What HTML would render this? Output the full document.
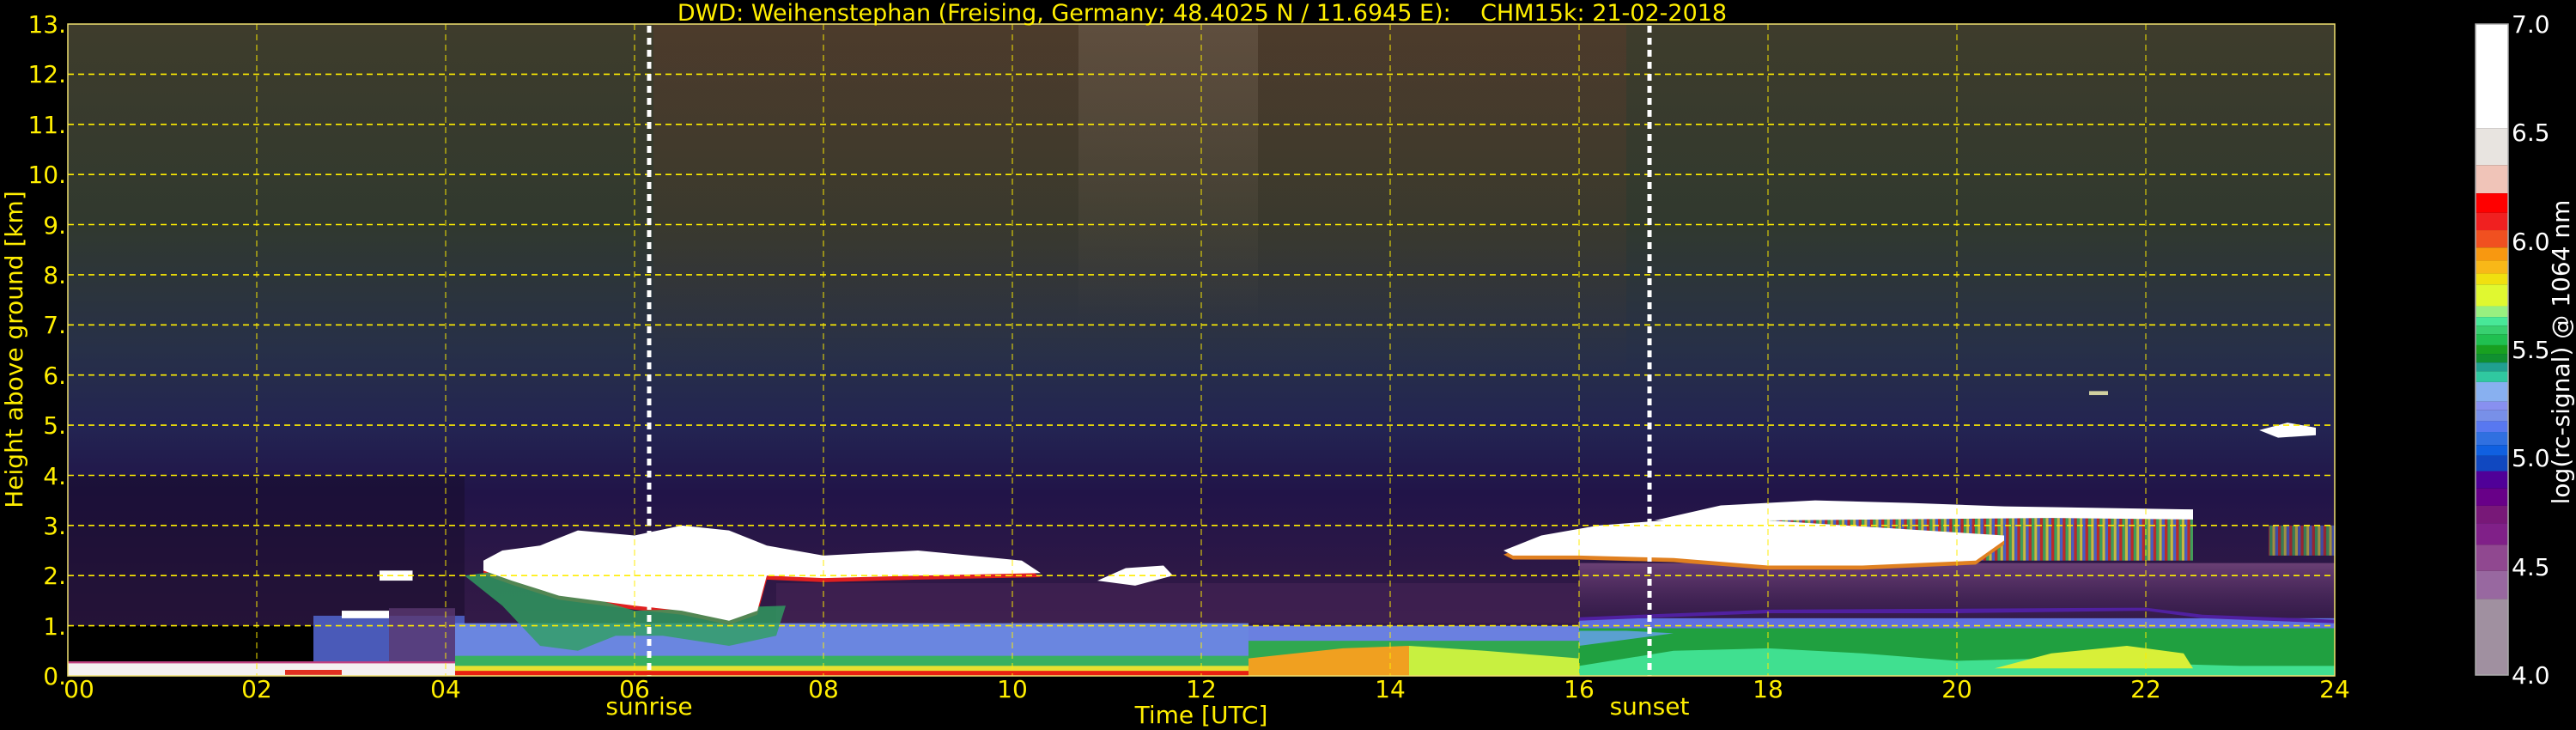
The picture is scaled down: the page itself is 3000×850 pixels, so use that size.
<!DOCTYPE html>
<html><head><meta charset="utf-8"><style>
html,body{margin:0;padding:0;background:#000;width:3000px;height:850px;overflow:hidden}
svg{display:block}
text{font-family:"DejaVu Sans","Liberation Sans",sans-serif;white-space:pre}
</style></head><body>
<svg width="3000" height="850" viewBox="0 0 3000 850" xmlns="http://www.w3.org/2000/svg">
<defs>
<linearGradient id="bg" x1="0" y1="0" x2="0" y2="1">
<stop offset="0" stop-color="#3e3c2c"/>
<stop offset="0.3" stop-color="#31392e"/>
<stop offset="0.5" stop-color="#273048"/>
<stop offset="0.62" stop-color="#232452"/>
<stop offset="0.72" stop-color="#211448"/>
<stop offset="0.85" stop-color="#2e1846"/>
<stop offset="1" stop-color="#381c48"/>
</linearGradient>
<linearGradient id="mid" x1="0" y1="0" x2="0" y2="1">
<stop offset="0" stop-color="#5a3a2a" stop-opacity="0.5"/>
<stop offset="1" stop-color="#5a3a2a" stop-opacity="0"/>
</linearGradient>
<linearGradient id="bright" x1="0" y1="0" x2="0" y2="1">
<stop offset="0" stop-color="#8a7a6a" stop-opacity="0.3"/>
<stop offset="1" stop-color="#8a7a6a" stop-opacity="0"/>
</linearGradient>
<linearGradient id="pinkish" x1="0" y1="0" x2="0" y2="1">
<stop offset="0" stop-color="#5a3068" stop-opacity="0"/>
<stop offset="1" stop-color="#7a4a80" stop-opacity="0.8"/>
</linearGradient>
<pattern id="stripes" width="0.12" height="1" patternUnits="userSpaceOnUse">
<rect x="0" y="0" width="0.03" height="1" fill="#e03020"/>
<rect x="0.03" y="0" width="0.03" height="1" fill="#40c060"/>
<rect x="0.06" y="0" width="0.03" height="1" fill="#f0e040"/>
<rect x="0.09" y="0" width="0.03" height="1" fill="#5070e0"/>
</pattern>
</defs>

<rect x="79" y="28" width="2640" height="759" fill="url(#bg)"/>
<g transform="translate(79,787) scale(110,-58.385)">
  <rect x="6.2" y="6" width="10.3" height="7" fill="url(#mid)" transform="translate(0,19) scale(1,-1)"/>
  <rect x="10.7" y="7" width="1.9" height="6" fill="url(#bright)" transform="translate(0,20) scale(1,-1)"/>
  <rect x="0" y="1" width="4.2" height="3" fill="#150c28" opacity="0.5"/>
  <rect x="16" y="1.05" width="8" height="1.2" fill="url(#pinkish)"/>
  <rect x="7.5" y="1.05" width="8.5" height="0.8" fill="#4a2658" opacity="0.5"/>

  <rect x="0" y="0" width="2.7" height="1" fill="#000"/>
  <rect x="2.6" y="0.2" width="1.6" height="1.0" fill="#4a5ab8"/>
  <rect x="3.4" y="0.15" width="0.7" height="1.2" fill="#5a3870" opacity="0.8"/>
  <rect x="4.1" y="0.25" width="8.4" height="0.8" fill="#6a86e0"/>
  <rect x="4.1" y="0.15" width="8.4" height="0.25" fill="#38b060"/>
  <rect x="4.1" y="0.08" width="8.4" height="0.12" fill="#e8e030"/>
  <rect x="4.1" y="0" width="9" height="0.1" fill="#e82010"/>
  <rect x="12.5" y="0.65" width="3.5" height="0.35" fill="#6a80e0"/>
  <rect x="12.5" y="0.3" width="3.5" height="0.4" fill="#30a850"/>
  <polygon points="12.5,0 14.2,0 14.2,0.6 13.5,0.55 12.5,0.35" fill="#f0a020"/>
  <polygon points="14.2,0 16,0 16,0.35 15,0.5 14.2,0.6" fill="#c8f040"/>
  <rect x="16" y="0.95" width="8" height="0.2" fill="#6070e0"/>
  <polygon points="16,1.1 18,1.25 20,1.25 22,1.3 22.6,1.15 24,1.05 24,1.12 22.6,1.22 22,1.36 18,1.32 16,1.17" fill="#5020a0"/>
  <rect x="16" y="0" width="8" height="0.95" fill="#20a040"/>
  <polygon points="16,0.2 17,0.5 18,0.55 19,0.45 20,0.3 21,0.35 22,0.25 23,0.2 24,0.2 24,0 16,0" fill="#40e090"/>
  <polygon points="20.4,0.15 21,0.45 21.8,0.6 22.4,0.45 22.5,0.15" fill="#d8f038"/>
  <polygon points="16,0.6 17,0.85 16.5,0.9 16,0.9" fill="#5aa0d0"/>
  <rect x="0" y="0" width="4.1" height="0.28" fill="#f4f0f0"/>
  <rect x="0" y="0.25" width="4.1" height="0.04" fill="#c04080"/>
  <rect x="2.3" y="0.02" width="0.6" height="0.1" fill="#e03020"/>
  <g transform="translate(0,-0.08)">
    <polygon fill="#e02020" points="4.4,2.3 4.6,2.5 5,2.6 5.4,2.9 6,2.8 6.5,3 7,2.9 7.4,2.6 8,2.4 9,2.5 10.1,2.3 10.3,2.05 9,2 8,1.95 7.4,2 7.3,1.3 7,1.1 6.5,1.3 6,1.4 5.2,1.6 4.7,1.9 4.4,2.1"/>
  </g>
  <polygon fill="#30a060" opacity="0.8" points="4.2,2.0 4.6,1.4 5.0,0.6 5.4,0.5 5.8,0.8 6.3,0.8 7.0,0.6 7.5,0.8 7.6,1.4 6,1.3 4.6,2.1"/>
  <polygon fill="#fff" points="4.4,2.3 4.6,2.5 5,2.6 5.4,2.9 6,2.8 6.5,3 7,2.9 7.4,2.6 8,2.4 9,2.5 10.1,2.3 10.3,2.05 9,2 8,1.95 7.4,2 7.3,1.3 7,1.1 6.5,1.3 6,1.4 5.2,1.6 4.7,1.9 4.4,2.1"/>
  <rect x="2.9" y="1.15" width="0.5" height="0.15" fill="#fff"/>
  <rect x="3.3" y="1.9" width="0.35" height="0.2" fill="#fff"/>
  <polygon fill="#fff" points="10.9,1.9 11.2,2.15 11.6,2.2 11.7,2.0 11.3,1.8"/>
  <rect x="17.5" y="2.3" width="5" height="0.85" fill="url(#stripes)" opacity="0.8"/>
  <rect x="23.3" y="2.4" width="0.7" height="0.6" fill="url(#stripes)" opacity="0.6"/>
  <g transform="translate(0,-0.08)">
    <polygon fill="#e08020" points="15.2,2.5 15.6,2.8 16.2,3 16.9,3.1 18,3.1 20.5,2.8 20.5,2.7 20.2,2.3 19,2.2 18,2.2 17,2.35 16,2.4 15.3,2.4"/>
  </g>
  <polygon fill="#fff" points="15.2,2.5 15.6,2.8 16.2,3 16.9,3.1 18,3.1 20.5,2.8 20.5,2.7 20.2,2.3 19,2.2 18,2.2 17,2.35 16,2.4 15.3,2.4"/>
  <polygon fill="#fff" points="16.8,3.1 17.5,3.4 18.5,3.5 19.5,3.45 20.5,3.38 22.5,3.32 22.5,3.12 21,3.15 18,3.1"/>
  <polygon fill="#fff" points="23.2,4.9 23.5,5.05 23.8,4.95 23.8,4.8 23.4,4.75"/>
  <rect x="21.4" y="5.6" width="0.2" height="0.08" fill="#d0d0a0"/>
</g>

<g stroke="#ffee00" stroke-width="1.6" stroke-dasharray="7,5" fill="none">
  <line x1="79" x2="2719" y1="144.8" y2="144.8"/><line x1="79" x2="2719" y1="203.2" y2="203.2"/>
  <line x1="79" x2="2719" y1="261.5" y2="261.5"/><line x1="79" x2="2719" y1="319.9" y2="319.9"/>
  <line x1="79" x2="2719" y1="378.3" y2="378.3"/><line x1="79" x2="2719" y1="436.7" y2="436.7"/>
  <line x1="79" x2="2719" y1="495.1" y2="495.1"/><line x1="79" x2="2719" y1="553.5" y2="553.5"/>
  <line x1="79" x2="2719" y1="611.8" y2="611.8"/><line x1="79" x2="2719" y1="670.2" y2="670.2"/>
  <line x1="79" x2="2719" y1="728.6" y2="728.6"/><line x1="79" x2="2719" y1="86.4" y2="86.4"/>
</g>
<g stroke="#ffee00" stroke-width="1.2" stroke-dasharray="7,5" fill="none" opacity="0.8">
  <line x1="299" x2="299" y1="28" y2="787"/><line x1="519" x2="519" y1="28" y2="787"/>
  <line x1="739" x2="739" y1="28" y2="787"/><line x1="959" x2="959" y1="28" y2="787"/>
  <line x1="1179" x2="1179" y1="28" y2="787"/><line x1="1399" x2="1399" y1="28" y2="787"/>
  <line x1="1619" x2="1619" y1="28" y2="787"/><line x1="1839" x2="1839" y1="28" y2="787"/>
  <line x1="2059" x2="2059" y1="28" y2="787"/><line x1="2279" x2="2279" y1="28" y2="787"/>
  <line x1="2499" x2="2499" y1="28" y2="787"/>
</g>
<g stroke="#fff" stroke-width="5" stroke-dasharray="8,6">
  <line x1="756" x2="756" y1="30" y2="787"/>
  <line x1="1921" x2="1921" y1="30" y2="787"/>
</g>
<rect x="79" y="28" width="2640" height="759" fill="none" stroke="#f0e070" stroke-width="1.5"/>

<text x="1400" y="24" fill="#ffee00" font-size="27" text-anchor="middle" xml:space="preserve">DWD: Weihenstephan (Freising, Germany; 48.4025 N / 11.6945 E):    CHM15k: 21-02-2018</text>

<g fill="#ffee00" font-size="28" text-anchor="end">
<text x="77" y="38">13.</text><text x="77" y="96">12.</text><text x="77" y="155">11.</text>
<text x="77" y="213">10.</text><text x="77" y="272">9.</text><text x="77" y="330">8.</text>
<text x="77" y="388">7.</text><text x="77" y="447">6.</text><text x="77" y="505">5.</text>
<text x="77" y="564">4.</text><text x="77" y="622">3.</text><text x="77" y="680">2.</text>
<text x="77" y="739">1.</text><text x="77" y="797">0.</text>
</g>
<text transform="translate(26,407) rotate(-90)" fill="#ffee00" font-size="28" text-anchor="middle">Height above ground [km]</text>

<g fill="#ffee00" font-size="28" text-anchor="middle">
<text x="92" y="812">00</text><text x="299" y="812">02</text><text x="519" y="812">04</text>
<text x="739" y="812">06</text><text x="959" y="812">08</text><text x="1179" y="812">10</text>
<text x="1399" y="812">12</text><text x="1619" y="812">14</text><text x="1839" y="812">16</text>
<text x="2059" y="812">18</text><text x="2279" y="812">20</text><text x="2499" y="812">22</text>
<text x="2719" y="812">24</text>
<text x="756" y="832">sunrise</text>
<text x="1921" y="832">sunset</text>
<text x="1399" y="842">Time [UTC]</text>
</g>

<g transform="translate(2883,28) scale(38,252.67)">
<rect x="0" y="0" width="1" height="0.48" fill="#ffffff"/>
<rect x="0" y="0.48" width="1" height="0.17" fill="#e8e4e0"/>
<rect x="0" y="0.65" width="1" height="0.13" fill="#f0c4b8"/>
<rect x="0" y="0.78" width="1" height="0.09" fill="#ff0000"/>
<rect x="0" y="0.87" width="1" height="0.08" fill="#f02020"/>
<rect x="0" y="0.95" width="1" height="0.08" fill="#f05020"/>
<rect x="0" y="1.03" width="1" height="0.06" fill="#f89810"/>
<rect x="0" y="1.09" width="1" height="0.06" fill="#f8b818"/>
<rect x="0" y="1.15" width="1" height="0.05" fill="#f0e010"/>
<rect x="0" y="1.20" width="1" height="0.10" fill="#e0f830"/>
<rect x="0" y="1.30" width="1" height="0.05" fill="#98f080"/>
<rect x="0" y="1.35" width="1" height="0.04" fill="#48e898"/>
<rect x="0" y="1.39" width="1" height="0.04" fill="#38d070"/>
<rect x="0" y="1.43" width="1" height="0.05" fill="#20c050"/>
<rect x="0" y="1.48" width="1" height="0.04" fill="#18a020"/>
<rect x="0" y="1.52" width="1" height="0.04" fill="#109030"/>
<rect x="0" y="1.56" width="1" height="0.04" fill="#20a090"/>
<rect x="0" y="1.60" width="1" height="0.05" fill="#30c8a0"/>
<rect x="0" y="1.65" width="1" height="0.09" fill="#88b0f0"/>
<rect x="0" y="1.74" width="1" height="0.04" fill="#8890f0"/>
<rect x="0" y="1.78" width="1" height="0.05" fill="#7890e8"/>
<rect x="0" y="1.83" width="1" height="0.05" fill="#5878f0"/>
<rect x="0" y="1.88" width="1" height="0.06" fill="#3070e0"/>
<rect x="0" y="1.94" width="1" height="0.05" fill="#1060e0"/>
<rect x="0" y="1.99" width="1" height="0.07" fill="#1048c0"/>
<rect x="0" y="2.06" width="1" height="0.08" fill="#500098"/>
<rect x="0" y="2.14" width="1" height="0.08" fill="#680088"/>
<rect x="0" y="2.22" width="1" height="0.08" fill="#781878"/>
<rect x="0" y="2.30" width="1" height="0.10" fill="#802088"/>
<rect x="0" y="2.40" width="1" height="0.12" fill="#904890"/>
<rect x="0" y="2.52" width="1" height="0.13" fill="#9868a0"/>
<rect x="0" y="2.65" width="1" height="0.35" fill="#a090a0"/>
</g>
<rect x="2883" y="28" width="38" height="758" fill="none" stroke="#aaa" stroke-width="1.5"/>
<g fill="#fff" font-size="28">
<text x="2925" y="38">7.0</text><text x="2925" y="164">6.5</text><text x="2925" y="291">6.0</text>
<text x="2925" y="417">5.5</text><text x="2925" y="543">5.0</text><text x="2925" y="670">4.5</text>
<text x="2925" y="796">4.0</text>
</g>
<text transform="translate(2992,410) rotate(-90)" fill="#fff" font-size="28" text-anchor="middle">log(rc-signal) @ 1064 nm</text>
</svg>
</body></html>
